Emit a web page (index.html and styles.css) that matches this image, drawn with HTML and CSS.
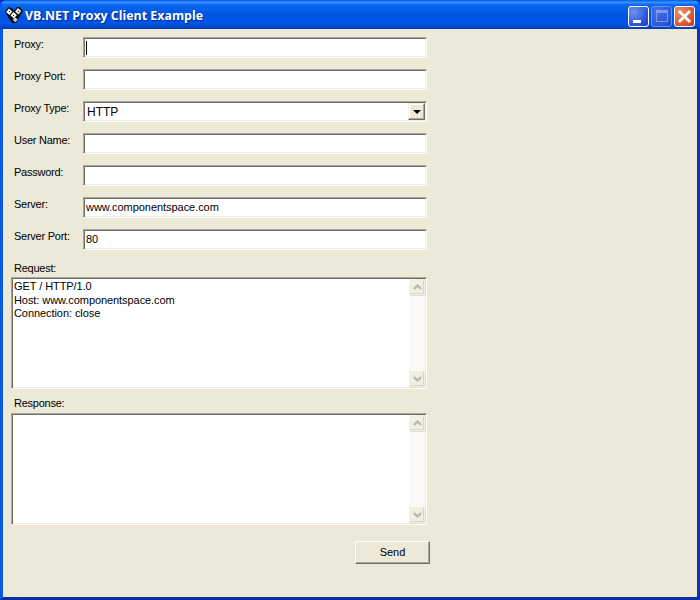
FILE: index.html
```html
<!DOCTYPE html>
<html lang="en">
<head>
<meta charset="UTF-8">
<title>VB.NET Proxy Client Example</title>
<link rel="stylesheet" href="styles.css">
</head>
<body>

<div class="window">
    <!-- Title bar -->
    <div class="titlebar">
        <svg class="app-icon" width="18" height="18" viewBox="0 0 18 18">
            <path d="M0 5 L4 1 L8 3 L9 5 L12 1 L15 1 L18 5 L15 10 L11 17 L7 17 L3 11 Z" fill="#0b0b0b"/>
            <rect x="2" y="3.5" width="4.5" height="4.5" fill="#f2f2f2" transform="rotate(40 4.2 5.7)"/>
            <rect x="11" y="3" width="4.5" height="4.5" fill="#e4e4e4" transform="rotate(40 13.2 5.2)"/>
            <rect x="6.5" y="7" width="4.5" height="4.5" fill="#fff" transform="rotate(40 8.7 9.2)"/>
            <rect x="8.5" y="12" width="3.5" height="3.5" fill="#cfcfcf" transform="rotate(40 10.2 13.7)"/>
            <path d="M4 5 h1 v1 h-1 Z M13 5 h1 v1 h-1 Z M8 9 h1 v1 h-1 Z" fill="#111"/>
        </svg>
        <span class="title">VB.NET Proxy Client Example</span>
        <div class="caption-btns">
            <div class="cap-btn cap-min"><span class="min-bar"></span></div>
            <div class="cap-btn cap-max"><span class="max-box"></span></div>
            <div class="cap-btn cap-close">
                <svg width="19" height="19" viewBox="0 0 19 19">
                    <path d="M5 5 L14 14 M14 5 L5 14" stroke="#fff" stroke-width="2.8" stroke-linecap="square"/>
                </svg>
            </div>
        </div>
    </div>

    <!-- Form -->
    <div class="client">
        <div class="rows">
            <div class="row">
                <label class="row-label">Proxy:</label>
                <div class="field"><span class="caret"></span></div>
            </div>
            <div class="row">
                <label class="row-label">Proxy Port:</label>
                <div class="field"></div>
            </div>
            <div class="row">
                <label class="row-label">Proxy Type:</label>
                <div class="field field-combo">
                    <span class="field-text">HTTP</span>
                    <div class="combo-btn"><span class="combo-arrow"></span></div>
                </div>
            </div>
            <div class="row">
                <label class="row-label">User Name:</label>
                <div class="field"></div>
            </div>
            <div class="row">
                <label class="row-label">Password:</label>
                <div class="field"></div>
            </div>
            <div class="row">
                <label class="row-label">Server:</label>
                <div class="field"><span class="field-value">www.componentspace.com</span></div>
            </div>
            <div class="row">
                <label class="row-label">Server Port:</label>
                <div class="field"><span class="field-value">80</span></div>
            </div>
        </div>

        <div class="memo-block">
            <label class="memo-label">Request:</label>
            <div class="memo">
                <div class="memo-text">GET / HTTP/1.0<br>Host: www.componentspace.com<br>Connection: close</div>
                <div class="scrollbar">
                    <div class="scroll-btn"><svg width="9" height="6" viewBox="0 0 9 6"><path d="M1 5 L4.5 1.5 L8 5" fill="none" stroke="#b5b3a6" stroke-width="2"/></svg></div>
                    <div class="scroll-track"></div>
                    <div class="scroll-btn"><svg width="9" height="6" viewBox="0 0 9 6"><path d="M1 1 L4.5 4.5 L8 1" fill="none" stroke="#b5b3a6" stroke-width="2"/></svg></div>
                </div>
            </div>
        </div>

        <div class="memo-block memo-block-second">
            <label class="memo-label memo-label-second">Response:</label>
            <div class="memo">
                <div class="memo-text"></div>
                <div class="scrollbar">
                    <div class="scroll-btn"><svg width="9" height="6" viewBox="0 0 9 6"><path d="M1 5 L4.5 1.5 L8 5" fill="none" stroke="#b5b3a6" stroke-width="2"/></svg></div>
                    <div class="scroll-track"></div>
                    <div class="scroll-btn"><svg width="9" height="6" viewBox="0 0 9 6"><path d="M1 1 L4.5 4.5 L8 1" fill="none" stroke="#b5b3a6" stroke-width="2"/></svg></div>
                </div>
            </div>
        </div>

        <div class="actions">
            <button class="send-btn">Send</button>
        </div>
    </div>
</div>

</body>
</html>
```

FILE: styles.css
```css
html, body {
    margin: 0;
    padding: 0;
}

body {
    width: 700px;
    height: 600px;
    overflow: hidden;
    font-family: "Liberation Sans", Arial, sans-serif;
    font-size: 11px;
    color: #000;
}

.window {
    width: 700px;
    height: 600px;
    display: flex;
    flex-direction: column;
    background: #0831d9;
}

/* Title bar */
.titlebar {
    height: 29px;
    flex-shrink: 0;
    box-sizing: border-box;
    display: flex;
    align-items: center;
    padding: 1px 5px 0 5px;
    border-radius: 7px 7px 0 0;
    background: linear-gradient(to bottom, #0058e6 0%, #3a93ff 8%, #0a6af0 16%, #0053e1 50%, #0055ea 80%, #0046c8 94%, #003dae 100%);
}

.app-icon {
    flex-shrink: 0;
}

.title {
    margin-left: 2px;
    font-family: "Open Sans", sans-serif;
    font-size: 12.4px;
    font-weight: 700;
    color: #fff;
    text-shadow: 1px 1px 1px #0a2a8c;
}

.caption-btns {
    margin-left: auto;
    display: flex;
    gap: 2px;
    padding-top: 2px;
}

.cap-btn {
    width: 19px;
    height: 19px;
    border: 1px solid #fff;
    border-radius: 3px;
    display: flex;
    align-items: center;
    justify-content: center;
    position: relative;
    overflow: hidden;
}

.cap-min {
    background: radial-gradient(circle at 25% 25%, #6f93ee, #2a52d8 70%, #1e3fc0);
}

.cap-max {
    border-color: #6f8fec;
    background: radial-gradient(circle at 25% 25%, #4572e6, #2a56d8 70%, #2347c4);
}

.cap-close {
    background: radial-gradient(circle at 25% 25%, #ec8d6e, #dc5a36 60%, #c23a1a);
}

.min-bar {
    position: absolute;
    left: 4px;
    bottom: 3px;
    width: 8px;
    height: 3px;
    background: #fff;
}

.max-box {
    width: 12px;
    height: 12px;
    box-sizing: border-box;
    border: 1px solid #7f9bea;
    border-top-width: 3px;
}

/* Client area */
.client {
    flex: 1;
    min-height: 0;
    padding: 8px 0 0 9px;
    background: #ece9d8;
    border-style: solid;
    border-width: 0 3px 3px 3px;
    border-color: #0a3cc8 #0a31b8 #0a2ea8 #0a5ae0;
}

.rows {
    display: flex;
    flex-direction: column;
    gap: 11px;
}

.row {
    display: flex;
    height: 21px;
}

.row-label {
    width: 71px;
    padding-left: 2px;
    box-sizing: border-box;
    line-height: 14px;
    letter-spacing: -0.25px;
}

.field {
    width: 344px;
    height: 21px;
    box-sizing: border-box;
    padding-left: 2px;
    background: #fff;
    border-style: solid;
    border-width: 1px;
    border-color: #aca899 #fff #fff #aca899;
    box-shadow: inset 1px 1px 0 #716f64, inset -1px -1px 0 #f1efe2;
    display: flex;
    align-items: center;
    white-space: pre;
}

.field-value {
    margin-top: -1px;
    letter-spacing: -0.05px;
}

.caret {
    width: 1px;
    height: 14px;
    background: #000;
}

.field-combo {
    justify-content: space-between;
    padding-right: 1px;
}

.field-text {
    padding-left: 1px;
    font-size: 12px;
}

.combo-btn {
    width: 17px;
    height: 17px;
    box-sizing: border-box;
    background: #ece9d8;
    border-style: solid;
    border-width: 1px;
    border-color: #f1efe2 #716f64 #716f64 #f1efe2;
    box-shadow: inset -1px -1px 0 #aca899, inset 1px 1px 0 #fff;
    display: flex;
    align-items: center;
    justify-content: center;
}

.combo-arrow {
    width: 0;
    height: 0;
    border-left: 4px solid transparent;
    border-right: 4px solid transparent;
    border-top: 4px solid #000;
}

/* Multi line boxes */
.memo-block {
    margin-top: 11px;
}

.memo-block-second {
    margin-top: 8px;
}

.memo-label {
    display: block;
    height: 16px;
    line-height: 14px;
    padding-left: 2px;
    letter-spacing: -0.25px;
}

.memo-label-second {
    line-height: 12px;
}

.memo {
    width: 416px;
    height: 112px;
    margin-left: -1px;
    box-sizing: border-box;
    display: flex;
    justify-content: space-between;
    background: #fff;
    border-style: solid;
    border-width: 1px;
    border-color: #aca899 #fff #fff #aca899;
    box-shadow: inset 1px 1px 0 #716f64, inset -1px -1px 0 #f1efe2;
}

.memo-text {
    padding: 2px 0 0 2px;
    line-height: 13.5px;
    letter-spacing: -0.07px;
    white-space: pre;
}

.scrollbar {
    width: 16px;
    margin: 1px 1px 1px 0;
    display: flex;
    flex-direction: column;
    background: repeating-conic-gradient(#f5f4ea 0% 25%, #fff 0% 50%) 0 0 / 2px 2px;
}

.scroll-btn {
    height: 16px;
    box-sizing: border-box;
    background: #f1efe2;
    border: 1px solid #f1efe2;
    box-shadow: inset -1px -1px 0 #d8d5c6, 1px 1px 0 #e0ddcf;
    display: flex;
    align-items: center;
    justify-content: center;
}

.scroll-track {
    flex: 1;
}

/* Bottom button */
.actions {
    width: 418px;
    margin-top: 16px;
    display: flex;
    justify-content: flex-end;
}

.send-btn {
    width: 75px;
    height: 23px;
    padding: 0 0 2px 0;
    box-sizing: border-box;
    font-family: inherit;
    font-size: 11px;
    color: #000;
    background: #ece9d8;
    border-style: solid;
    border-width: 1px;
    border-color: #fff #716f64 #716f64 #fff;
    box-shadow: inset -1px -1px 0 #aca899;
}
```
